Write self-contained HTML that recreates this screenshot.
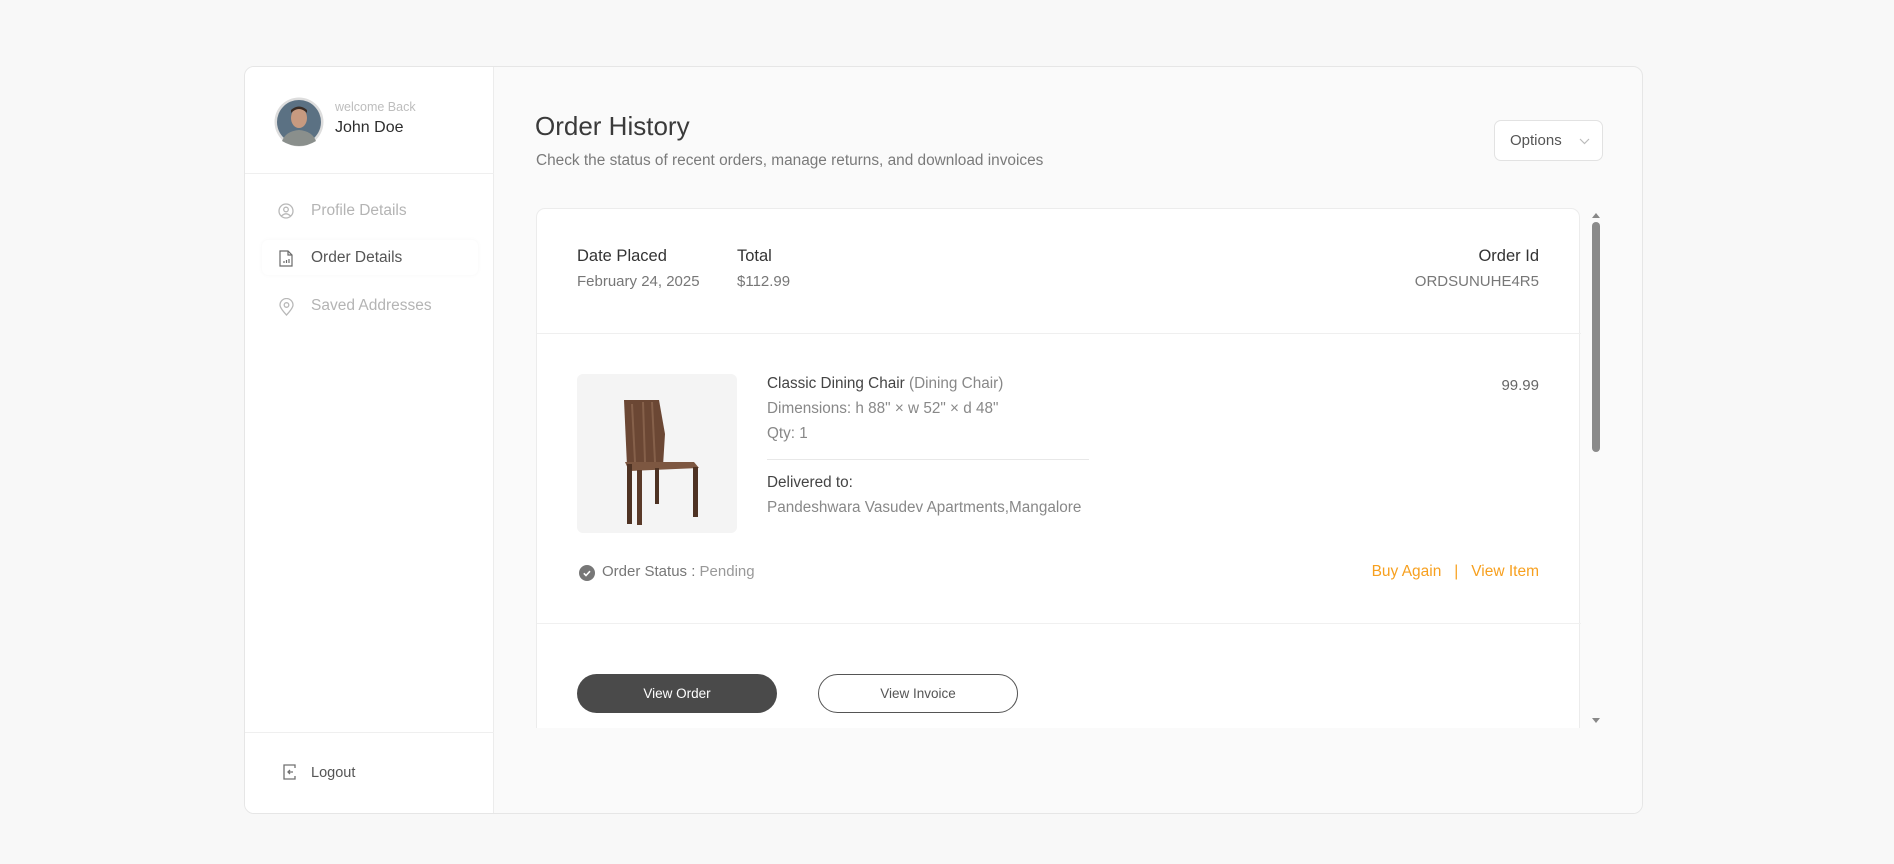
<!DOCTYPE html>
<html><head><meta charset="utf-8"><style>
*{margin:0;padding:0;box-sizing:border-box}
body{width:1894px;height:864px;background:#f8f8f8;font-family:"Liberation Sans",sans-serif;position:relative;overflow:hidden;color:#333}
.a{position:absolute;white-space:nowrap}
#card{position:absolute;left:244px;top:66px;width:1399px;height:748px;background:#fafafa;border:1px solid #e6e6e6;border-radius:10px;overflow:hidden}
#side{position:absolute;left:0;top:0;width:249px;height:100%;background:#fff;border-right:1px solid #ececec}
.hr{position:absolute;height:1px;background:#efefef}
.nav{font-size:15.5px;color:#b4b4b4}
.oc{position:absolute;left:291px;top:141px;width:1044px;height:600px;background:#fff;border:1px solid #ececec;border-bottom:none;border-radius:9px 9px 0 0}
.p{font-size:15.3px}
</style></head><body>
<div id="card">
 <div id="side">
  <svg class="a" style="left:29px;top:30px" width="50" height="50" viewBox="0 0 50 50">
   <circle cx="25" cy="25" r="24.5" fill="#ddd"/><circle cx="25" cy="25" r="22" fill="#5b7183"/>
   <path d="M8 44 Q12 34 25 33 Q38 34 42 44 Q34 49 25 49 Q16 49 8 44Z" fill="#8a8f8c"/>
   <ellipse cx="25" cy="21" rx="8" ry="10" fill="#c79a80"/><path d="M17 16 Q25 8 33 16 L33 13 Q25 6 17 13Z" fill="#3a2c24"/>
  </svg>
  <div class="a" style="left:90px;top:33px;font-size:12.5px;color:#bdbdbd">welcome Back</div>
  <div class="a" style="left:90px;top:52px;font-size:16px;color:#2d2d2d">John Doe</div>
  <div class="hr" style="left:0;top:106px;width:249px"></div>
  <svg class="a" style="left:33px;top:136px" width="16" height="16" viewBox="0 0 16 16" fill="none" stroke="#b8b8b8" stroke-width="1.3"><circle cx="8" cy="8" r="7"/><circle cx="8" cy="6.5" r="2.3"/><path d="M3.5 13 Q8 8.5 12.5 13"/></svg>
  <div class="a nav" style="left:66px;top:135px">Profile Details</div>
  <div class="a" style="left:17px;top:173px;width:216px;height:35px;box-shadow:0 0 4px rgba(0,0,0,0.04);border-radius:6px"></div>
  <svg class="a" style="left:34px;top:183px" width="14" height="17" viewBox="0 0 14 17" fill="none" stroke="#6a6a6a" stroke-width="1.2"><path d="M1 1h8l4 4v11H1z"/><path d="M9 1v4h4"/><path d="M5 13v-2M7.5 13v-3M10 13V9"/></svg>
  <div class="a nav" style="left:66px;top:182px;color:#555">Order Details</div>
  <svg class="a" style="left:34px;top:231px" width="15" height="18" viewBox="0 0 15 18" fill="none" stroke="#b8b8b8" stroke-width="1.3"><path d="M7.5 17 Q1 10 1 7 A6.5 6.5 0 0 1 14 7 Q14 10 7.5 17Z"/><circle cx="7.5" cy="7" r="2.3"/></svg>
  <div class="a nav" style="left:66px;top:230px">Saved Addresses</div>
  <div class="hr" style="left:0;top:665px;width:249px"></div>
  <svg class="a" style="left:38px;top:697px" width="15" height="16" viewBox="0 0 15 16" fill="none" stroke="#707070" stroke-width="1.3"><path d="M6 1H1v14h11v-3M12 4V1H6"/><path d="M10 8H5M7 6 5 8l2 2"/></svg>
  <div class="a" style="left:66px;top:698px;font-size:14.5px;color:#555">Logout</div>
 </div>
 <div class="a" style="left:290px;top:44px;font-size:26px;color:#3a3a3a">Order History</div>
 <div class="a" style="left:291px;top:85px;font-size:15.4px;color:#7a7a7a">Check the status of recent orders, manage returns, and download invoices</div>
 <div class="a" style="left:1249px;top:53px;width:109px;height:41px;background:#fff;border:1px solid #e2e2e2;border-radius:7px;font-size:15px;color:#555;padding:11px 0 0 15px">Options<svg style="position:absolute;left:84px;top:17px" width="11" height="7" viewBox="0 0 11 7" fill="none" stroke="#bbb" stroke-width="1.2"><path d="M1 1l4.5 4.5L10 1"/></svg></div>
 <div class="oc">
  <div class="a" style="left:40px;top:38px;font-size:16.5px;color:#333">Date Placed</div>
  <div class="a" style="left:40px;top:64px;font-size:15px;color:#777">February 24, 2025</div>
  <div class="a" style="left:200px;top:38px;font-size:16.5px;color:#333">Total</div>
  <div class="a" style="left:200px;top:64px;font-size:15px;color:#777">$112.99</div>
  <div class="a" style="right:40px;top:38px;font-size:16.5px;color:#333">Order Id</div>
  <div class="a" style="right:40px;top:64px;font-size:15px;color:#777">ORDSUNUHE4R5</div>
  <div class="hr" style="left:0;top:124px;width:1044px"></div>
  <div class="a" style="left:40px;top:165px;width:160px;height:159px;background:#f4f4f4;border-radius:6px">
   <svg width="160" height="159" viewBox="0 0 160 159">
    <path d="M47 26 L82 26 L88 60 L86 92 L50 92 Z" fill="#6b4734"/>
    <path d="M48 88 L117 88 L122 94 L52 97 Z" fill="#7d5741"/>
    <rect x="50" y="90" width="5" height="60" fill="#4e3223"/>
    <rect x="60" y="96" width="5" height="55" fill="#5a3a29"/>
    <rect x="78" y="94" width="4" height="36" fill="#4e3223"/>
    <rect x="116" y="93" width="5" height="50" fill="#4e3223"/>
    <path d="M55 30 L58 88 M66 28 L68 88 M75 28 L78 88" stroke="#85604a" stroke-width="2"/>
   </svg>
  </div>
  <div class="a p" style="left:230px;top:166px;color:#444">Classic Dining Chair <span style="color:#888">(Dining Chair)</span></div>
  <div class="a p" style="left:230px;top:191px;color:#888">Dimensions: h 88" × w 52" × d 48"</div>
  <div class="a p" style="left:230px;top:216px;color:#888">Qty: 1</div>
  <div class="hr" style="left:230px;top:250px;width:322px;background:#e8e8e8"></div>
  <div class="a p" style="left:230px;top:265px;color:#444">Delivered to:</div>
  <div class="a p" style="left:230px;top:290px;color:#888">Pandeshwara Vasudev Apartments,Mangalore</div>
  <div class="a" style="right:40px;top:168px;font-size:15px;color:#666">99.99</div>
  <svg class="a" style="left:42px;top:356px" width="16" height="16" viewBox="0 0 16 16"><circle cx="8" cy="8" r="8" fill="#777"/><path d="M4.8 8.3l2.2 2.2 4-4.3" fill="none" stroke="#fff" stroke-width="1.6"/></svg>
  <div class="a" style="left:65px;top:354px;font-size:15px;color:#777">Order Status : <span style="color:#999">Pending</span></div>
  <div class="a" style="right:40px;top:354px;font-size:15.5px;color:#f7a01f">Buy Again &nbsp;&nbsp;|&nbsp;&nbsp; View Item</div>
  <div class="hr" style="left:0;top:414px;width:1044px;background:#f0f0f0"></div>
  <div class="a" style="left:40px;top:465px;width:200px;height:39px;border-radius:20px;background:#4a4a4a;color:#fff;font-size:13.5px;text-align:center;line-height:39px">View Order</div>
  <div class="a" style="left:281px;top:465px;width:200px;height:39px;border-radius:20px;border:1px solid #555;color:#555;font-size:13.5px;text-align:center;line-height:37px">View Invoice</div>
 </div>
 <div class="a" style="top:661px;width:1399px;height:90px;background:#fafafa;left:250px"></div>
 <svg class="a" style="left:1346px;top:144px" width="10" height="8" viewBox="0 0 10 8"><path d="M1 7L5 2l4 5z" fill="#888"/></svg>
 <div class="a" style="left:1347px;top:155px;width:8px;height:230px;background:#8a8a8a;border-radius:4px"></div>
 <svg class="a" style="left:1346px;top:650px" width="10" height="8" viewBox="0 0 10 8"><path d="M1 1h8L5 6z" fill="#888"/></svg>
</div>
</body></html>
